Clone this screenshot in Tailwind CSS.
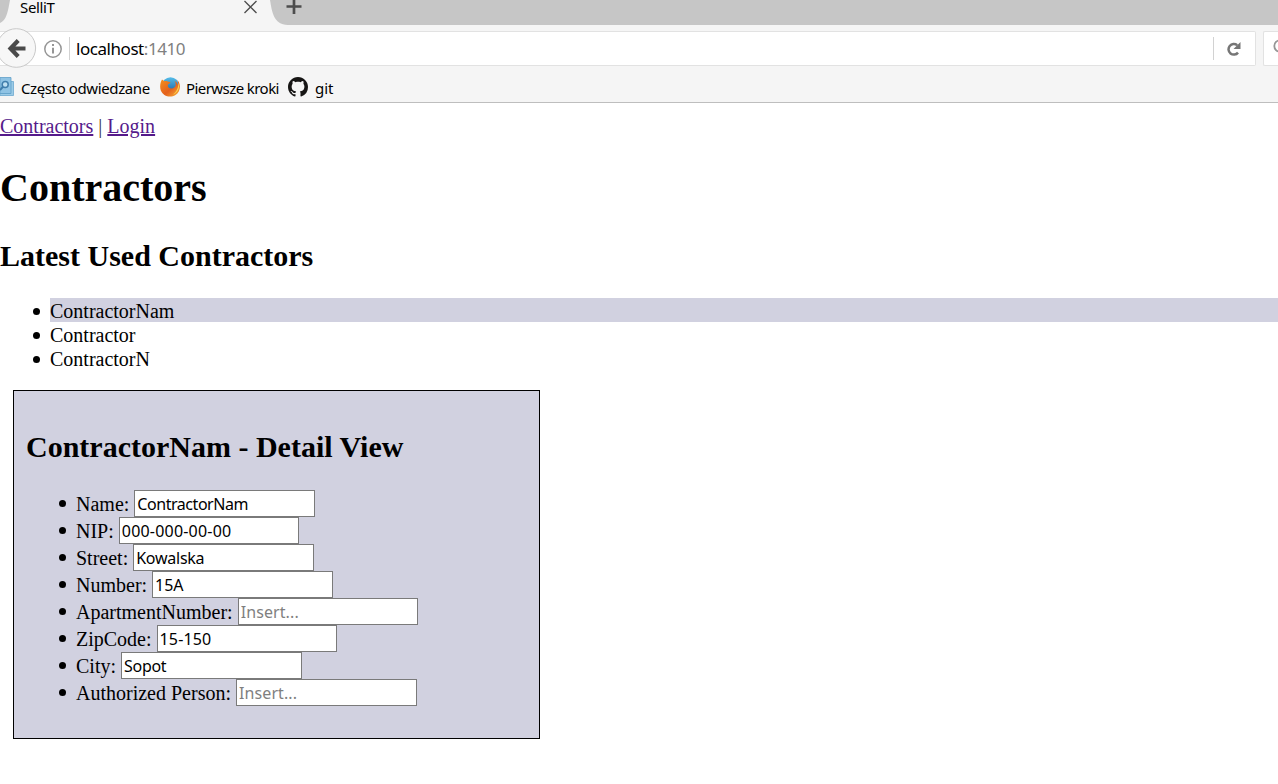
<!DOCTYPE html>
<html lang="pl">
<head>
<meta charset="utf-8">
<title>SelliT</title>
<script src="https://cdn.jsdelivr.net/npm/@tailwindcss/browser@4"></script>
</head>
<body class="h-[784px] w-[1278px] overflow-hidden bg-white text-black">
<header class="h-[103px] border-b border-[#bebebe] bg-[#f5f5f5] font-['Noto_Sans',sans-serif]">
  <div class="relative h-[25px] bg-[#c6c6c6]">
    <svg class="absolute left-0 top-0" width="310" height="25" viewBox="0 0 310 25" fill="none">
      <path d="M0 25V23C5 21 7 15 8.500 8L10 0H270C272 11 273 24.500 288 25Z" fill="#f5f5f5"/>
      <path d="M244.500 1L256.500 13M256.500 1L244.500 13" stroke="#4d4d4d" stroke-width="1.300"/>
      <path d="M294 0V14M286.500 6.500H301.500" stroke="#4d4d4d" stroke-width="2.700"/>
    </svg>
    <span class="absolute left-5 top-0 text-[15px] leading-[15px] tracking-[-0.35px]">SelliT</span>
  </div>
  <div class="relative flex h-[47px] items-start pt-[6px]">
    <div class="flex h-[35px] w-[1256px] items-center rounded-r-[2px] border border-l-0 border-[#e2e2e2] bg-white">
      <svg class="ml-[44px] shrink-0" width="18" height="18" viewBox="0 0 18 18" fill="none"><circle cx="9" cy="9" r="8.200" stroke="#969696" stroke-width="1.500"/><path d="M9 4V6M9 7.800V13.500" stroke="#969696" stroke-width="2"/></svg>
      <div class="ml-[7px] h-[23px] w-px bg-[#d2d2d2]"></div>
      <span class="ml-[6px] text-[17px] leading-6 tracking-[-0.45px]">localhost<span class="text-[#808080]">:1410</span></span>
      <div class="ml-auto h-[23px] w-px bg-[#d2d2d2]"></div>
      <svg class="ml-[13px] mr-[14px]" width="14" height="14" viewBox="0 0 14 14" fill="none"><path d="M10.200 3.200A5.300 5.300 0 1 0 11 10.600" stroke="#767676" stroke-width="2.500"/><path d="M13.500 0V7H6.500Z" fill="#767676"/></svg>
    </div>
    <div class="ml-[7px] h-[35px] w-[15px] overflow-hidden rounded-l-[2px] border border-r-0 border-[#e2e2e2] bg-white">
      <svg class="ml-[9px] mt-[7px]" width="14" height="16" viewBox="0 0 14 16" fill="none"><circle cx="7" cy="7" r="5.700" stroke="#969696" stroke-width="1.800"/></svg>
    </div>
    <svg class="absolute left-0 top-[3px]" width="37" height="40" viewBox="0 0 37 40" fill="none">
      <circle cx="16.300" cy="20" r="19.300" fill="#f7f7f7" stroke="#c9c9c9"/>
      <path d="M25.500 20.500H11M18.200 12.500L10.500 20.500L18.200 28.500" stroke="#4a4a4a" stroke-width="4.200"/>
    </svg>
  </div>
  <div class="flex h-[30px] items-center text-[15px] leading-5 [&>span]:pt-[2px]">
    <svg class="shrink-0" width="14" height="20" viewBox="0 0 14 20" fill="none"><path d="M10 4.500H13.500V18.500H0V16.500H10Z" fill="#9bcbe7" stroke="#6ca8cf" stroke-width=".8"/><path d="M0 .5H11V16.500H0Z" fill="#8fc3e4" stroke="#5f9fc8" stroke-width=".8"/><circle cx="5.200" cy="7.500" r="3" fill="#bfe0f2" stroke="#3f7dab" stroke-width="1.500"/><path d="M3 9.800L0 13" stroke="#3f7dab" stroke-width="2"/></svg>
    <span class="ml-[7px] w-[130px] whitespace-nowrap tracking-[-0.39px]">Często odwiedzane</span>
    <svg class="ml-[9px] shrink-0" width="20" height="20" viewBox="0 0 20 20">
      <defs><linearGradient id="fox" x1="0" y1="0" x2="1" y2="1"><stop stop-color="#f5921e"/><stop offset=".55" stop-color="#e4601c"/><stop offset="1" stop-color="#f9b83c"/></linearGradient><linearGradient id="globe" x1="0" y1="0" x2="0" y2="1"><stop stop-color="#55bde9"/><stop offset="1" stop-color="#18559b"/></linearGradient></defs>
      <circle cx="10.500" cy="9" r="8.700" fill="url(#globe)"/>
      <path d="M2 2.500L4.500 4.200C6 3.700 7.500 4 8.500 4.700L10.500 5C9.800 7 8 7 7.800 8.300C7.600 10.700 10.500 12.500 13.500 11C16.500 9.400 16 6 14.500 4C17 5 17.700 7 17.500 8.500C18.500 6.500 18 4 17 2.800C21.500 7 20.700 14.500 15.500 18C10 21.500 3 19 .8 13.500C-.6 9.500 .5 5 2 2.500Z" fill="url(#fox)"/>
      <path d="M18.600 5.500C20.300 11 17.500 16 13 17.600C17 14.500 18.500 10 18.600 5.500Z" fill="#fbd44c"/>
    </svg>
    <span class="ml-[6px] w-[94px] whitespace-nowrap tracking-[-0.57px]">Pierwsze kroki</span>
    <svg class="ml-[8px] shrink-0" width="20" height="20" viewBox="0 0 16 16"><path fill="#161514" d="M8 0C3.580 0 0 3.580 0 8c0 3.540 2.290 6.530 5.470 7.590.4.070.55-.17.55-.38 0-.19-.01-.82-.01-1.490-2.010.37-2.530-.49-2.690-.94-.09-.23-.48-.94-.82-1.130-.28-.15-.68-.52-.01-.53.63-.01 1.080.58 1.230.82.72 1.210 1.870.87 2.330.66.070-.52.28-.87.51-1.070-1.780-.2-3.640-.89-3.640-3.950 0-.87.31-1.590.82-2.150-.08-.2-.36-1.020.08-2.120 0 0 .67-.21 2.200.82.64-.18 1.320-.27 2-.27s1.360.09 2 .27c1.530-1.040 2.200-.82 2.200-.82.44 1.100.16 1.920.08 2.120.51.56.82 1.270.82 2.150 0 3.070-1.870 3.750-3.650 3.950.29.25.54.73.54 1.480 0 1.070-.01 1.930-.01 2.200 0 .21.15.46.55.38A8.010 8.010 0 0 0 16 8c0-4.420-3.580-8-8-8z"/></svg>
    <span class="ml-[7px] tracking-[-0.1px]">git</span>
  </div>
</header>
<main class="font-['Liberation_Serif',serif] text-[20px] leading-6">
  <nav class="pt-[11px]"><a class="text-[#551a8b] underline" href="#">Contractors</a> <span class="text-[#333]">|</span> <a class="text-[#551a8b] underline" href="#">Login</a></nav>
  <h1 class="mt-[27px] text-[40px] font-bold leading-[46px]">Contractors</h1>
  <h2 class="mt-[28px] text-[30px] font-bold leading-[34px]">Latest Used Contractors</h2>
  <ul class="mt-[25px] pl-[50px] leading-[26px] [&>li]:relative [&>li]:h-6 [&>li]:before:absolute [&>li]:before:left-[-17px] [&>li]:before:top-[10px] [&>li]:before:size-[7px] [&>li]:before:rounded-full [&>li]:before:bg-black">
    <li class="bg-[#d1d1e0]">ContractorNam</li>
    <li>Contractor</li>
    <li>ContractorN</li>
  </ul>
  <section class="ml-[13px] mt-[20px] h-[349px] w-[527px] border border-black bg-[#d1d1e0] px-3 pt-[39px]">
    <h2 class="text-[30px] font-bold leading-[34px]">ContractorNam - Detail View</h2>
    <ul class="mt-[26px] pl-[50px] leading-[29px] [&_input]:h-[27px] [&_input]:border [&_input]:border-[#7a7a7a] [&_input]:bg-white [&_input]:px-[2px] [&_input]:pt-[2px] [&_input]:align-top [&_input]:font-['Noto_Sans',sans-serif] [&_input]:text-[16px] [&_input]:placeholder:text-[#7f7f7f] [&>li]:relative [&>li]:h-[27px] [&>li]:before:absolute [&>li]:before:left-[-17px] [&>li]:before:top-[10px] [&>li]:before:size-[7px] [&>li]:before:rounded-full [&>li]:before:bg-black">
      <li>Name: <input class="w-[181px] tracking-[-0.45px]" value="ContractorNam"></li>
      <li>NIP: <input class="w-[180px] tracking-[0.2px]" value="000-000-00-00"></li>
      <li>Street: <input class="w-[181px] tracking-[-0.25px]" value="Kowalska"></li>
      <li>Number: <input class="w-[181px] tracking-[-0.1px]" value="15A"></li>
      <li>ApartmentNumber: <input class="w-[180px] tracking-[0.1px]" placeholder="Insert..."></li>
      <li>ZipCode: <input class="w-[180px] tracking-[0.15px]" value="15-150"></li>
      <li>City: <input class="w-[181px] tracking-[-0.3px]" value="Sopot"></li>
      <li>Authorized Person: <input class="w-[181px] tracking-[0.1px]" placeholder="Insert..."></li>
    </ul>
  </section>
</main>
</body>
</html>
